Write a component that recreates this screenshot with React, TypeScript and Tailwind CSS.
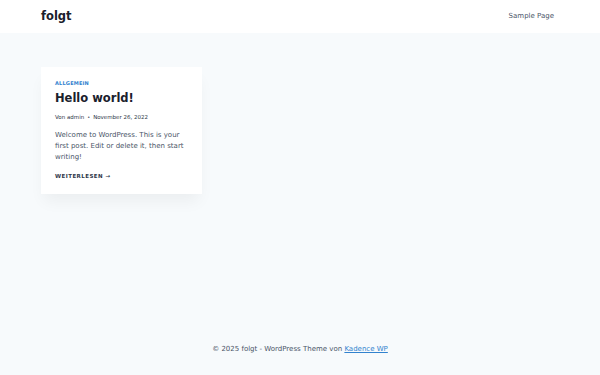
import React from 'react';

const App: React.FC = () => {
  return (
    <div className="min-h-screen flex flex-col bg-[#f7fafc] text-[#2d3748]" style={{ fontFamily: '"DejaVu Sans", sans-serif' }}>
      <header className="bg-white h-[33px] flex items-center justify-between px-[41px]">
        <div className="text-[11.5px] font-bold text-[#1a202c]">folgt</div>
        <nav className="text-[7px] text-[#4a5568] pr-[5px]">Sample Page</nav>
      </header>

      <main className="flex-1 px-[41px] pt-[34px]">
        <article className="w-[161px] bg-white px-[14px] pt-[12px] pb-[14px] shadow-[0_10px_15px_-3px_rgba(0,0,0,0.05)]">
          <div className="text-[5px] font-bold tracking-[0.04em] text-[#3182ce] leading-[8px]">ALLGEMEIN</div>
          <h2 className="text-[11.5px] font-bold text-[#1a202c] leading-[16px] mt-[3px]">Hello world!</h2>
          <div className="text-[5.5px] text-[#2d3748] mt-[7px] leading-[9px] flex items-center gap-[3px]">
            <span>Von admin</span>
            <span className="text-[5px]">•</span>
            <span>November 26, 2022</span>
          </div>
          <p className="text-[7px] leading-[11.3px] text-[#4a5568] mt-[7.5px]">
            Welcome to WordPress. This is your first post. Edit or delete it, then start writing!
          </p>
          <div className="text-[5.5px] font-bold tracking-[0.08em] text-[#2d3748] mt-[9px] leading-[8px]">WEITERLESEN →</div>
        </article>
      </main>

      <footer className="h-[52px] flex items-center justify-center text-[7px] text-[#4a5568]">
        <span>© 2025 folgt - WordPress Theme von <a href="#" className="text-[#3182ce] underline">Kadence WP</a></span>
      </footer>
    </div>
  );
};

export default App;
